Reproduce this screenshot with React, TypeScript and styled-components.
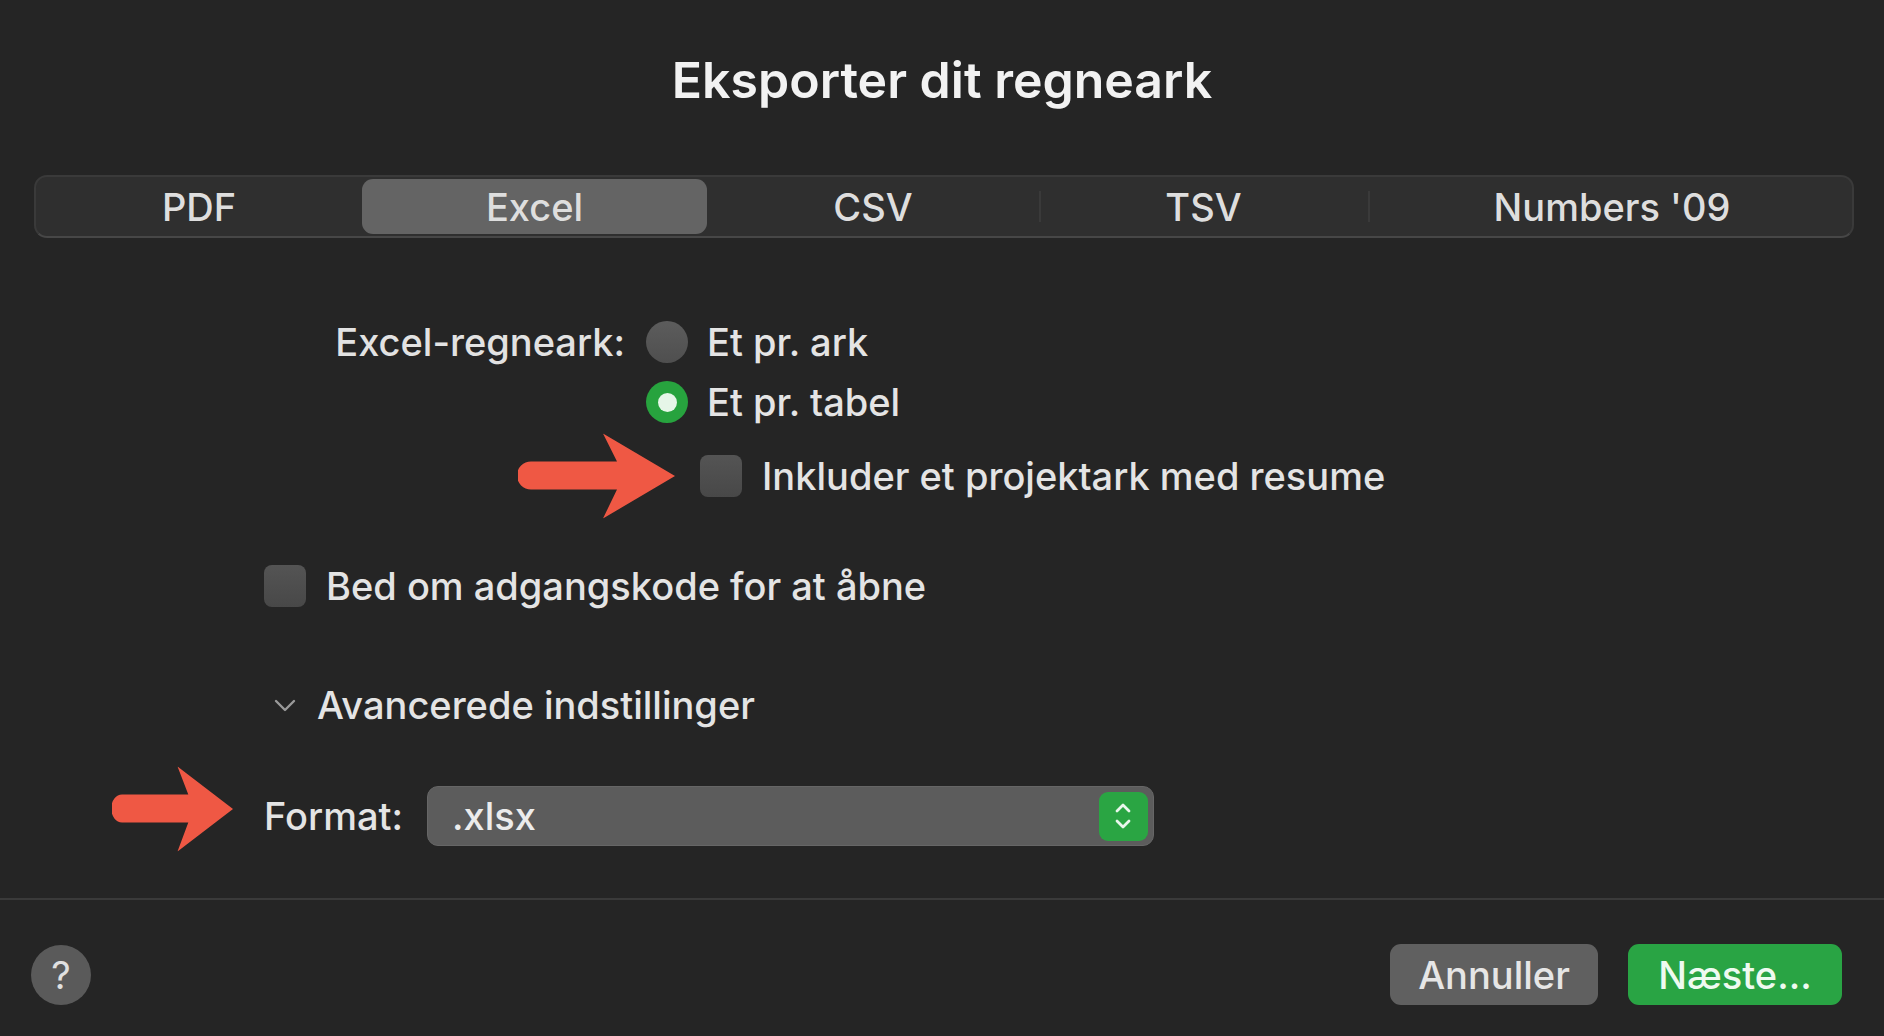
import React from "react";
import styled, { createGlobalStyle } from "styled-components";

const Global = createGlobalStyle`
  html, body {
    margin: 0;
    padding: 0;
    background: #252525;
  }
  body {
    font-family: Inter, "Noto Sans", "Liberation Sans", sans-serif;
    color: #e6e6e6;
    -webkit-font-smoothing: antialiased;
  }
`;

const tabs = [
  { label: "PDF", width: 326 },
  { label: "Excel", width: 345 },
  { label: "CSV", width: 332 },
  { label: "TSV", width: 329 },
  { label: "Numbers '09", width: 488 },
];

const Arrow = ({ w, h }: { w: number; h: number }) => (
  <svg width={w} height={h} viewBox="0 0 157 85" preserveAspectRatio="none">
    <path
      d="M13 28 L99 28 L85 0 L157 42.5 L85 85 L99 56 L13 56 A14 14 0 0 1 13 28 Z"
      fill="#ef5844"
    />
  </svg>
);

const App = () => {
  return (
    <>
      <Global />
      <Dialog>
        <Title>Eksporter dit regneark</Title>

        <Segmented>
          {tabs.map((t, i) => (
            <Segment key={t.label} w={t.width} active={i === 1} divider={i >= 3}>
              {t.label}
            </Segment>
          ))}
        </Segmented>

        <Options>
          <ChoiceGrid>
            <FieldLabel>Excel-regneark:</FieldLabel>
            <RadioGroup>
              <Row>
                <Radio />
                <Text>Et pr. ark</Text>
              </Row>
              <Row>
                <Radio checked />
                <Text>Et pr. tabel</Text>
              </Row>
              <SubRow>
                <Pointer gap={25}>
                  <Arrow w={157} h={85} />
                </Pointer>
                <Checkbox />
                <Text>Inkluder et projektark med resume</Text>
              </SubRow>
            </RadioGroup>
          </ChoiceGrid>

          <PasswordRow>
            <Checkbox />
            <Text>Bed om adgangskode for at åbne</Text>
          </PasswordRow>

          <Disclosure>
            <svg width="24" height="15" viewBox="0 0 24 15">
              <path d="M3 3 L12 12 L21 3" stroke="#9a9a9a" strokeWidth="2.4" fill="none" strokeLinecap="round" strokeLinejoin="round" />
            </svg>
            <Text>Avancerede indstillinger</Text>
          </Disclosure>

          <FormatRow>
            <Pointer gap={31} offset={-7}>
              <Arrow w={121} h={85} />
            </Pointer>
            <Text>Format:</Text>
            <Popup>
              <PopupValue>.xlsx</PopupValue>
              <Stepper>
                <svg width="24" height="34" viewBox="0 0 24 34">
                  <path d="M6 12 L12 6 L18 12" stroke="#e9f7ec" strokeWidth="2.8" fill="none" strokeLinecap="round" strokeLinejoin="round" />
                  <path d="M6 22 L12 28 L18 22" stroke="#e9f7ec" strokeWidth="2.8" fill="none" strokeLinecap="round" strokeLinejoin="round" />
                </svg>
              </Stepper>
            </Popup>
          </FormatRow>
        </Options>

        <Divider />

        <Footer>
          <Help>?</Help>
          <Buttons>
            <Button w={208}>Annuller</Button>
            <Button w={214} primary>Næste...</Button>
          </Buttons>
        </Footer>
      </Dialog>
    </>
  );
};

export default App;

const Dialog = styled.div`
  width: 1884px;
  height: 1036px;
  display: flex;
  flex-direction: column;
  padding-top: 50px;
  box-sizing: border-box;
  overflow: hidden;
`;

const Title = styled.h1`
  margin: 0;
  text-align: center;
  font-size: 50px;
  line-height: 60px;
  font-weight: 600;
  color: #f2f2f2;
`;

const Segmented = styled.div`
  margin: 65px 30px 0 34px;
  height: 63px;
  display: flex;
  background: #2f2f2f;
  border: 2px solid #3a3a3a;
  border-bottom-color: #474747;
  border-radius: 13px;
  box-sizing: border-box;
  padding: 2px 0;
`;

const Segment = styled.div<{ w: number; active?: boolean; divider?: boolean }>`
  position: relative;
  flex: 0 0 ${(p) => p.w}px;
  display: flex;
  align-items: center;
  justify-content: center;
  font-size: 38px;
  font-weight: 500;
  color: #dedede;
  border-radius: 11px;
  background: ${(p) => (p.active ? "#646464" : "transparent")};
  &::before {
    content: "";
    display: ${(p) => (p.divider ? "block" : "none")};
    position: absolute;
    left: 0;
    top: 12px;
    bottom: 12px;
    width: 2px;
    background: #3a3a3a;
  }
`;

const Options = styled.div`
  display: flex;
  flex-direction: column;
  padding-left: 264px;
  margin-top: 83px;
`;

const ChoiceGrid = styled.div`
  display: grid;
  grid-template-columns: 361px auto;
  column-gap: 21px;
  align-items: start;
`;

const FieldLabel = styled.div`
  height: 42px;
  display: flex;
  align-items: center;
  justify-content: flex-end;
  font-size: 38px;
  font-weight: 500;
  color: #e2e2e2;
  white-space: nowrap;
`;

const RadioGroup = styled.div`
  display: flex;
  flex-direction: column;
  gap: 18px;
`;

const Row = styled.div`
  display: flex;
  align-items: center;
  height: 42px;
  gap: 19px;
`;

const SubRow = styled(Row)`
  position: relative;
  margin-top: 14px;
  margin-left: 54px;
  gap: 20px;
`;

const Pointer = styled.div<{ gap: number; offset?: number }>`
  position: absolute;
  right: calc(100% + ${(p) => p.gap}px);
  top: 50%;
  transform: translateY(calc(-50% + ${(p) => p.offset ?? 0}px));
  display: flex;
`;

const Text = styled.span`
  font-size: 38px;
  font-weight: 500;
  color: #e4e4e4;
  white-space: nowrap;
`;

const Radio = styled.span<{ checked?: boolean }>`
  width: 42px;
  height: 42px;
  border-radius: 50%;
  flex: none;
  display: flex;
  align-items: center;
  justify-content: center;
  background: ${(p) => (p.checked ? "#27a33e" : "linear-gradient(#5c5c5c, #4f4f4f)")};
  &::after {
    content: "";
    display: ${(p) => (p.checked ? "block" : "none")};
    width: 19px;
    height: 19px;
    border-radius: 50%;
    background: #e6f6e8;
  }
`;

const Checkbox = styled.span`
  width: 42px;
  height: 42px;
  border-radius: 8px;
  flex: none;
  background: linear-gradient(#545454, #484848);
`;

const PasswordRow = styled(Row)`
  margin-top: 69px;
  height: 40px;
  gap: 20px;
`;

const Disclosure = styled(Row)`
  margin-top: 78px;
  padding-left: 9px;
  gap: 20px;
`;

const FormatRow = styled(Row)`
  position: relative;
  margin-top: 60px;
  height: 60px;
  gap: 24px;
`;

const Popup = styled.div`
  width: 727px;
  height: 60px;
  box-sizing: border-box;
  display: flex;
  align-items: center;
  justify-content: space-between;
  padding: 0 5px 0 24px;
  background: #5c5c5c;
  border: 1px solid #666;
  border-radius: 11px;
`;

const PopupValue = styled.span`
  font-size: 38px;
  font-weight: 500;
  color: #ececec;
`;

const Stepper = styled.span`
  width: 49px;
  height: 49px;
  border-radius: 9px;
  background: #2aa543;
  display: flex;
  align-items: center;
  justify-content: center;
`;

const Divider = styled.div`
  margin-top: 52px;
  height: 2px;
  background: #3a3a3a;
`;

const Footer = styled.div`
  display: flex;
  align-items: center;
  justify-content: space-between;
  padding: 44px 42px 0 31px;
`;

const Help = styled.div`
  width: 60px;
  height: 60px;
  border-radius: 50%;
  background: #5a5a5a;
  display: flex;
  align-items: center;
  justify-content: center;
  font-size: 38px;
  font-weight: 400;
  color: #e0e0e0;
`;

const Buttons = styled.div`
  display: flex;
  gap: 30px;
`;

const Button = styled.button<{ w: number; primary?: boolean }>`
  width: ${(p) => p.w}px;
  height: 61px;
  border: none;
  border-radius: 11px;
  font-family: inherit;
  font-size: 38px;
  font-weight: 500;
  color: ${(p) => (p.primary ? "#eefaf0" : "#e6e6e6")};
  background: ${(p) => (p.primary ? "#29a444" : "#606060")};
  padding: 0;
`;
